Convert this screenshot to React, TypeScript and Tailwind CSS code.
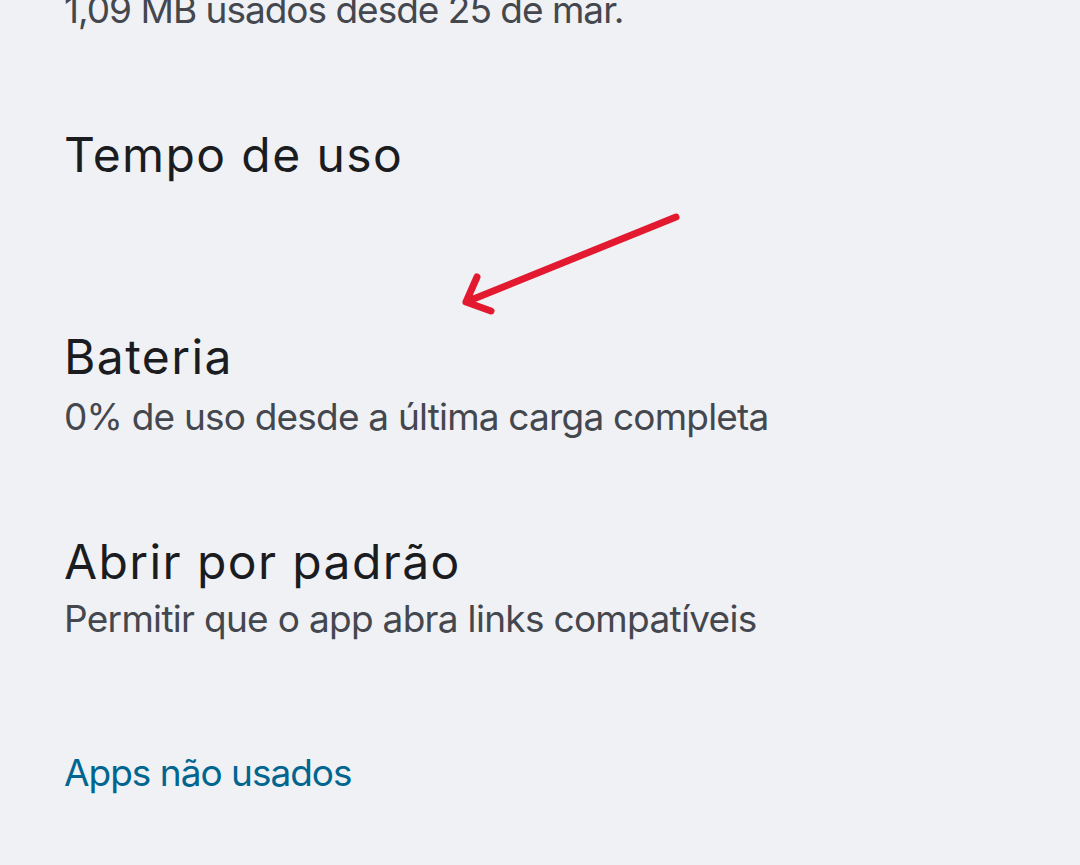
export default function App() {
  return (
    <div
      className="relative h-[865px] w-[1080px] overflow-hidden bg-[#eff1f4] pl-16"
      style={{ fontFamily: "Inter, 'DejaVu Sans', sans-serif" }}
    >
      <p className="-mt-[12px] text-[37px] leading-[44px] tracking-[-1px] text-[#44474e]">1,09 MB usados desde 25 de mar.</p>

      <h2 className="mt-[95px] text-[48px] leading-[56px] tracking-[1.4px] text-[#1b1c1f]">Tempo de uso</h2>

      <div className="mt-[146px]">
        <h2 className="text-[48px] leading-[56px] tracking-[1.4px] text-[#1b1c1f]">Bateria</h2>
        <p className="mt-[10px] text-[37px] leading-[44px] tracking-[-0.8px] text-[#44474e]">0% de uso desde a última carga completa</p>
      </div>

      <div className="mt-[95px]">
        <h2 className="text-[48px] leading-[56px] tracking-[1.4px] text-[#1b1c1f]">Abrir por padrão</h2>
        <p className="mt-[7px] text-[37px] leading-[44px] tracking-[-0.7px] text-[#44474e]">Permitir que o app abra links compatíveis</p>
      </div>

      <p className="mt-[110px] text-[37px] leading-[44px] tracking-[-1px] text-[#00658f]">Apps não usados</p>

      {/* annotation drawn over the screenshot */}
      <svg className="absolute left-0 top-0" width="1080" height="865" viewBox="0 0 1080 865" fill="none">
        <path
          d="M676 217 L466 302 M477 277 L466 302 L491 311"
          stroke="#e3192f"
          strokeWidth="7"
          strokeLinecap="round"
          strokeLinejoin="round"
        />
      </svg>
    </div>
  );
}
